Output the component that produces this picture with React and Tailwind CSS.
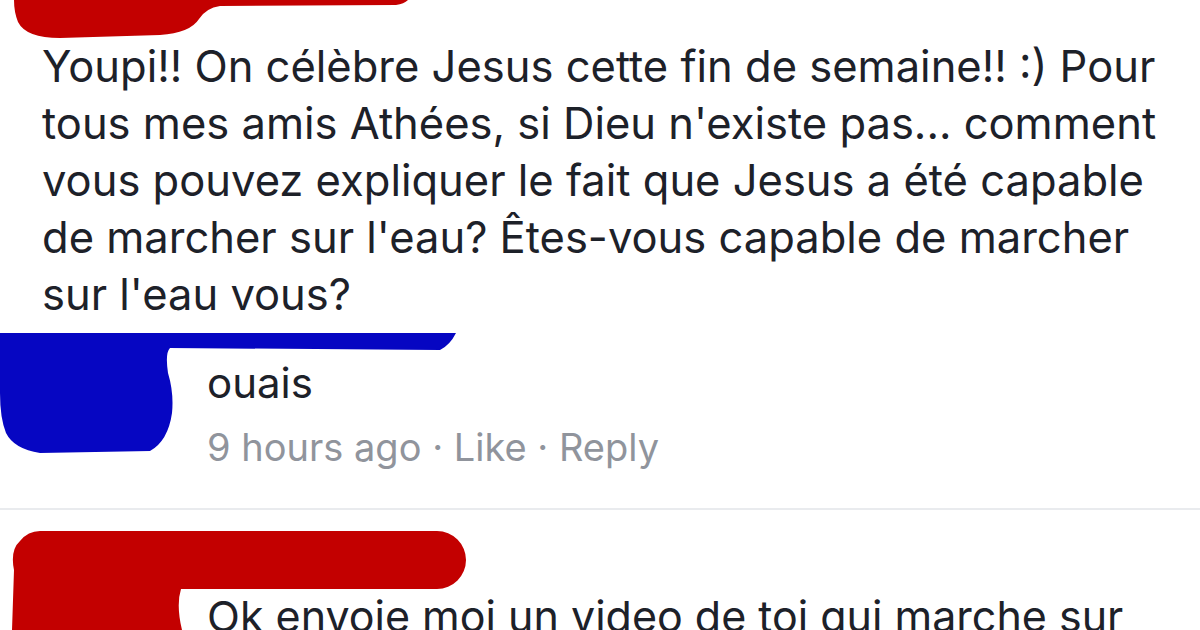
import React from 'react';

const font = { fontFamily: 'Inter, "Noto Sans", "Liberation Sans", sans-serif' };

function TopScribble() {
  return (
    <svg className="absolute left-0 top-0" width="420" height="42" viewBox="0 0 420 42">
      <path
        d="M14 0 H408 Q404 4 396 5 L220 6 Q206 8 199 19 Q190 33 160 35 L60 38 Q26 38 18 22 Q14 12 14 0 Z"
        fill="#c30000"
      />
    </svg>
  );
}

function BlueScribble() {
  return (
    <svg className="absolute left-0 top-0" width="470" height="125" viewBox="0 0 470 125">
      <path
        d="M0 0 H456 Q450 12 440 17 L170 15 Q165 20 168 40 Q174 60 172 80 Q168 108 150 118 L40 120 Q14 116 6 100 Q0 85 0 60 Z"
        fill="#0606c2"
      />
    </svg>
  );
}

function BottomScribble() {
  return (
    <svg className="absolute left-0 top-0" width="480" height="120" viewBox="0 0 480 120">
      <path
        d="M40 21 H437 A29 29 0 0 1 437 79 L181 79 Q176 95 182 120 L12 120 L14 60 Q10 40 20 31 Q28 21 40 21 Z"
        fill="#c30000"
      />
    </svg>
  );
}

export default function App() {
  return (
    <div className="w-[1200px] h-[630px] overflow-hidden bg-white" style={font}>
      {/* post */}
      <div className="relative pt-[38px] pl-[42px] pr-[10px]">
        <TopScribble />
        <p className="text-[43.5px] leading-[57px] text-[#1d2129] whitespace-nowrap">
          Youpi!! On célèbre Jesus cette fin de semaine!! :) Pour
          <br />
          tous mes amis Athées, si Dieu n'existe pas... comment
          <br />
          vous pouvez expliquer le fait que Jesus a été capable
          <br />
          de marcher sur l'eau? Êtes-vous capable de marcher
          <br />
          sur l'eau vous?
        </p>
      </div>

      {/* comment 1 */}
      <div className="relative mt-[10px] h-[175px] pl-[207px] pt-[28px]">
        <BlueScribble />
        <div className="text-[42px] leading-[44px] text-[#1d2129]">ouais</div>
        <div className="mt-[20px] text-[38px] leading-[44px] text-[#90949c] whitespace-nowrap">
          9 hours ago · Like · Reply
        </div>
      </div>

      <div className="h-[2px] bg-[#e9ebee]" />

      {/* comment 2 */}
      <div className="relative h-[120px] pl-[207px] pt-[84px]">
        <BottomScribble />
        <div className="text-[43px] leading-[44px] text-[#1d2129] whitespace-nowrap">
          Ok envoie moi un video de toi qui marche sur
        </div>
      </div>
    </div>
  );
}
